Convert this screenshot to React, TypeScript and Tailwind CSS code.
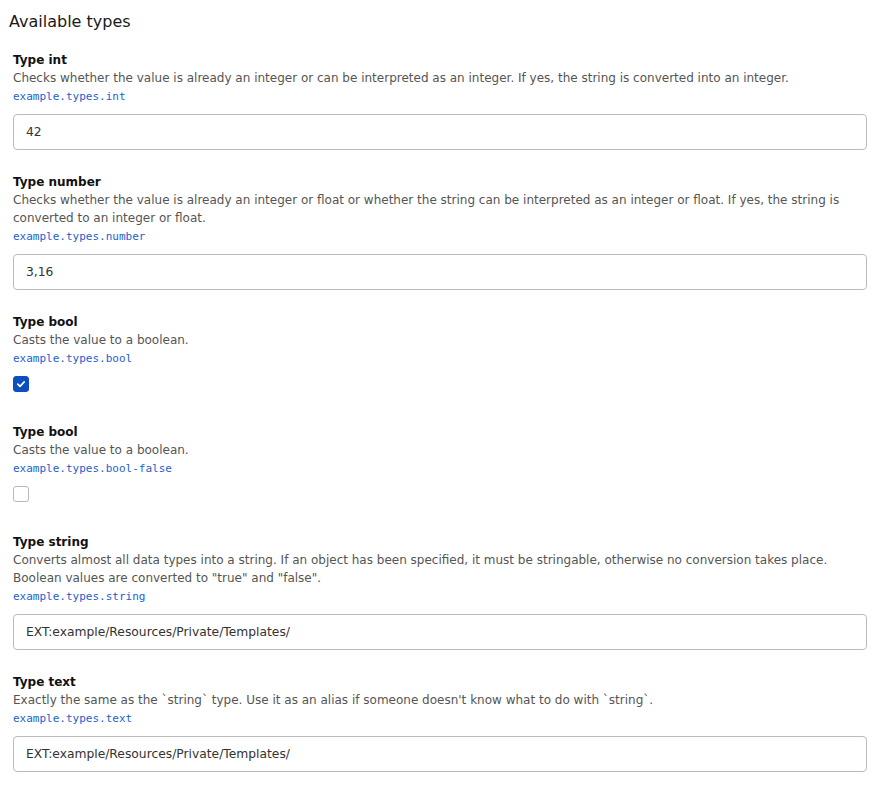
import React, { useState } from 'react';

type Item = {
  title: string;
  description: string;
  path: string;
  kind: 'text' | 'checkbox';
  value?: string;
  checked?: boolean;
};

const ITEMS: Item[] = [
  {
    title: 'Type int',
    description:
      'Checks whether the value is already an integer or can be interpreted as an integer. If yes, the string is converted into an integer.',
    path: 'example.types.int',
    kind: 'text',
    value: '42',
  },
  {
    title: 'Type number',
    description:
      'Checks whether the value is already an integer or float or whether the string can be interpreted as an integer or float. If yes, the string is converted to an integer or float.',
    path: 'example.types.number',
    kind: 'text',
    value: '3,16',
  },
  {
    title: 'Type bool',
    description: 'Casts the value to a boolean.',
    path: 'example.types.bool',
    kind: 'checkbox',
    checked: true,
  },
  {
    title: 'Type bool',
    description: 'Casts the value to a boolean.',
    path: 'example.types.bool-false',
    kind: 'checkbox',
    checked: false,
  },
  {
    title: 'Type string',
    description:
      'Converts almost all data types into a string. If an object has been specified, it must be stringable, otherwise no conversion takes place. Boolean values are converted to "true" and "false".',
    path: 'example.types.string',
    kind: 'text',
    value: 'EXT:example/Resources/Private/Templates/',
  },
  {
    title: 'Type text',
    description:
      "Exactly the same as the `string` type. Use it as an alias if someone doesn't know what to do with `string`.",
    path: 'example.types.text',
    kind: 'text',
    value: 'EXT:example/Resources/Private/Templates/',
  },
];

const Checkbox: React.FC<{ defaultChecked?: boolean }> = ({ defaultChecked }) => {
  const [checked, setChecked] = useState(!!defaultChecked);
  return (
    <button
      type="button"
      onClick={() => setChecked(c => !c)}
      className={
        checked
          ? 'w-4 h-4 rounded-[3px] bg-[#0b4fc1] border border-[#0b4fc1] flex items-center justify-center'
          : 'w-4 h-4 rounded-[3px] bg-white border border-[#b8b8b8] flex items-center justify-center'
      }
    >
      {checked && (
        <svg width="10" height="10" viewBox="0 0 10 10" fill="none">
          <path d="M1.8 5.2 L4 7.3 L8.2 2.8" stroke="white" strokeWidth="1.7" strokeLinecap="round" strokeLinejoin="round" />
        </svg>
      )}
    </button>
  );
};

const App: React.FC = () => {
  return (
    <div className="min-h-screen bg-white font-['DejaVu_Sans',Verdana,sans-serif] text-[12px] text-[#1a1a1a] pl-[13px] pr-[24px]">
      <h2 className="-ml-[4px] pt-[12px] text-[16px] leading-[20px] font-normal text-[#1a1a1a]">Available types</h2>
      <div className="pt-[19px]">
        {ITEMS.map((item, i) => (
          <div key={i} className="mb-[23px]">
            <div className="font-bold leading-[18px] text-[#111]">{item.title}</div>
            <div className="leading-[18px] text-[#555]">{item.description}</div>
            <div className="mt-[1px] leading-[18px] font-['DejaVu_Sans_Mono',monospace] text-[11px] text-[#1c5fd0]">
              {item.path}
            </div>
            {item.kind === 'text' ? (
              <input
                type="text"
                defaultValue={item.value}
                className="mt-[8px] block w-full h-[36px] px-[12px] border border-[#bbbbbb] rounded-[4px] text-[12.3px] text-[#333] bg-white outline-none"
              />
            ) : (
              <div className="mt-[8px] h-[24px]">
                <Checkbox defaultChecked={item.checked} />
              </div>
            )}
          </div>
        ))}
      </div>
    </div>
  );
};

export default App;
